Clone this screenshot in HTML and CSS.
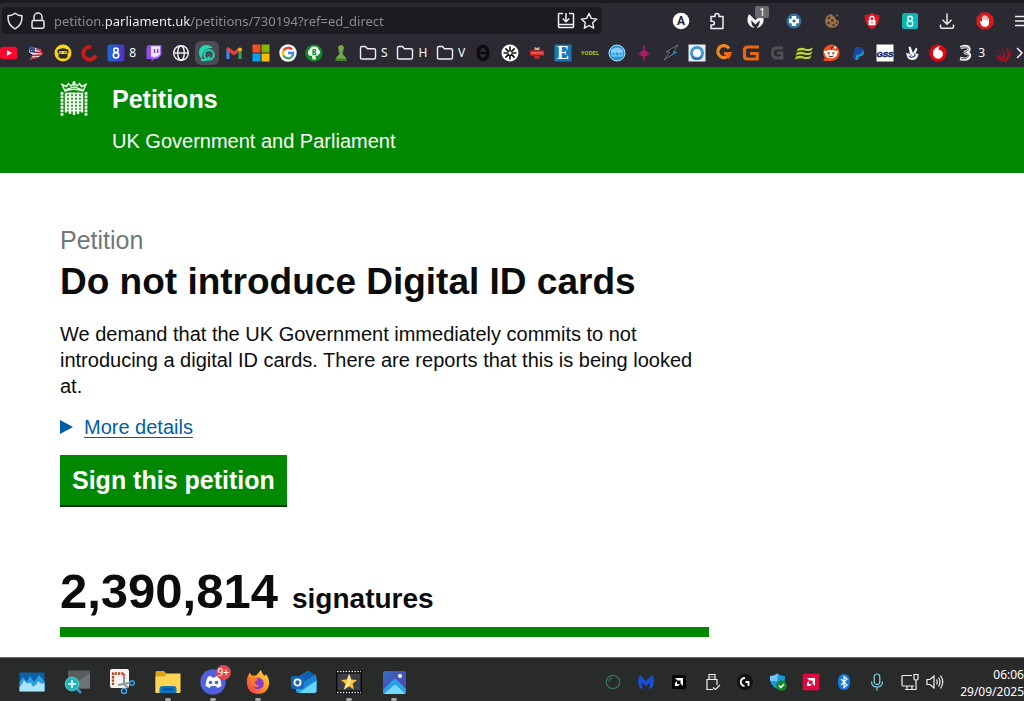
FILE: index.html
```html
<!DOCTYPE html>
<html lang="en">
<head>
<meta charset="utf-8">
<meta name="viewport" content="width=device-width, initial-scale=1">
<title>Do not introduce Digital ID cards - Petitions</title>
<link rel="stylesheet" href="styles.css">
</head>
<body>
<div class="browser">
  <div class="toolbar">
    <div class="urlbar">
      <svg class="ico18" viewBox="0 0 18 18" fill="none" stroke="#e8e8ec" stroke-width="1.5" stroke-linejoin="round"><path d="M9 1.3C7 3 4.500 3.800 2 3.800C1.600 9.500 4 14.300 9 16.800C14 14.300 16.400 9.500 16 3.800C13.500 3.800 11 3 9 1.300Z"/></svg>
      <svg class="ico18 lock" viewBox="0 0 18 18" fill="none" stroke="#e8e8ec" stroke-width="1.5"><rect x="3" y="8.500" width="12" height="7.800" rx="1.500"/><path d="M5 8.500V5a4 4 0 0 1 8 0v3.500"/></svg>
      <input class="address" type="text" aria-label="Address" value="petition.parliament.uk/petitions/730194?ref=ed_direct">
      <button class="tool" aria-label="Install page"><svg class="ico18" viewBox="0 0 18 18" fill="none" stroke="#f0f0f4" stroke-width="1.500"><path d="M6 1.500H2.200Q1.500 1.500 1.500 2.200V14.800Q1.500 15.500 2.200 15.500H15.800Q16.500 15.500 16.500 14.800V2.200Q16.500 1.500 15.800 1.500H12M1.500 12.500H16.500M9 1V9.500M5.700 6.500L9 9.700L12.300 6.500"/></svg></button>
      <button class="tool" aria-label="Bookmark this page"><svg class="ico18" viewBox="0 0 18 18" fill="none" stroke="#f0f0f4" stroke-width="1.400" stroke-linejoin="round"><path d="M9 1.500L11.300 6.400L16.700 7.100L12.700 10.800L13.700 16.200L9 13.500L4.300 16.200L5.300 10.800L1.300 7.100L6.700 6.400Z"/></svg></button>
    </div>
    <div class="extensions">
      <button class="tool" aria-label="Account"><svg class="ico20" viewBox="0 0 20 20"><circle cx="10" cy="10" r="8.300" fill="#fff"/><text class="glyph" x="10" y="14.200" font-size="12" fill="#25242c">A</text></svg></button>
      <button class="tool" aria-label="Extensions"><svg class="ico20" viewBox="0 0 20 20" fill="none" stroke="#f0f0f4" stroke-width="1.500" stroke-linejoin="round"><path d="M2 5.500H6V4.500a2 2 0 0 1 4 0V5.500H14V17.500H2V14H3.500a1.900 1.900 0 0 0 0-3.800H2Z"/></svg></button>
      <button class="tool badged" aria-label="Malwarebytes"><svg class="ico20" viewBox="0 0 20 20" fill="#f3f3f5"><path d="M2 3Q-1 9 1.500 13Q3.500 16.500 7.500 17Q3.500 13 4.500 9.500L8.500 13.500L12.500 9.500Q13.500 13 9.500 17Q13.500 16.500 15.500 13Q18 9 15 3L8.500 9Z"/></svg><span class="badge">1</span></button>
      <button class="tool" aria-label="Health extension"><svg class="ico20" viewBox="0 0 20 20"><circle cx="9" cy="10" r="7.500" fill="#356f9d"/><path d="M6.800 5H11.200V7.800H14V12.200H11.200V15H6.800V12.200H4V7.800H6.800Z" fill="#fff"/><rect x="7.600" y="8.600" width="2.800" height="2.800" fill="#356f9d"/></svg></button>
      <button class="tool" aria-label="Cookies"><svg class="ico20" viewBox="0 0 20 20"><path d="M9 3Q10 6 12 6Q12 9 16 10A7 7 0 1 1 9 3Z" fill="#96704a"/><g fill="#4e3523"><circle cx="6" cy="7" r="1.200"/><circle cx="9.500" cy="9.500" r="1.300"/><circle cx="5.500" cy="12" r="1.300"/><circle cx="10.500" cy="14" r="1.200"/><circle cx="13.500" cy="12" r="1"/></g><circle cx="14" cy="4.500" r="1" fill="#96704a"/></svg></button>
      <button class="tool" aria-label="Ad guard"><svg class="ico20" viewBox="0 0 20 20"><path d="M10 1.800Q13 4 17.500 4Q18 13.500 10 18.500Q2 13.500 2.500 4Q7 4 10 1.800Z" fill="#dd1820"/><rect x="6.500" y="9" width="7" height="5.300" rx="0.500" fill="#fff"/><path d="M8 9V7.500a2 2 0 0 1 4 0V9" fill="none" stroke="#fff" stroke-width="1.300"/><path d="M10 10.500V12.500" stroke="#dd1820"/></svg></button>
      <button class="tool" aria-label="Number eight"><svg class="ico20" viewBox="0 0 20 20"><defs><linearGradient id="teal" x2="1" y2="1"><stop stop-color="#0fb39b"/><stop offset="1" stop-color="#08bccd"/></linearGradient></defs><rect x="2" y="2" width="16" height="16" rx="2.500" fill="url(#teal)"/><g fill="none" stroke="#d9fff5" stroke-width="1.500"><circle cx="10" cy="7.500" r="2.300"/><circle cx="10" cy="12.500" r="2.800"/></g></svg></button>
      <button class="tool" aria-label="Downloads"><svg class="ico20" viewBox="0 0 20 20" fill="none" stroke="#e5e5ea" stroke-width="1.500"><path d="M9 2.500V13M4.500 8.800L9 13.200L13.500 8.800M2.500 13.500V16Q2.500 17.200 3.700 17.200H14.300Q15.500 17.200 15.500 16V13.500"/></svg></button>
      <button class="tool" aria-label="Ad blocker"><svg class="ico20" viewBox="0 0 20 20"><path d="M5.500 1.500H12.500L17.500 6.500V13.500L12.500 18.500H5.500L0.500 13.500V6.500Z" fill="#d91b1b"/><path d="M6 15Q4.500 13 3.800 10Q5 9.500 6 11V6Q7 5 7.400 6V4.700Q8.200 4 8.800 4.700V4.500Q9.800 3.800 10.200 4.900V5.500Q11.200 5 11.600 6V7.500Q12.500 7 12.900 8V12Q12.900 15.500 9.500 15.800Q7 16 6 15Z" fill="#fff"/><path d="M7.400 6V9M8.900 5V9M10.200 5.500V9M11.600 7V10" stroke="#d91b1b" stroke-width="0.400"/></svg></button>
      <button class="tool" aria-label="Menu"><svg class="menu-ico" viewBox="0 0 10 20" stroke="#f0f0f4" stroke-width="1.500"><path d="M1 5.500H10M1 10H10M1 14.500H10"/></svg></button>
    </div>
  </div>
  <nav class="bookmarks" aria-label="Bookmarks">
    <div class="bookmark-list">
      <a href="#" aria-label="YouTube"><svg class="ico18" viewBox="0 0 18 18"><rect x="0" y="2.700" width="17.500" height="12.600" rx="3" fill="#f8082e"/><path d="M7 6.300L12 9L7 11.700Z" fill="#fff"/></svg></a>
      <a href="#" aria-label="US flag"><svg class="ico18" viewBox="0 0 18 18"><path d="M2 2L14 5.500V8L15.500 9Q13 14.500 3 15.500L6 11L2 8Z" fill="#f0e9eb"/><path d="M9 5L14 6.500M8 8.300L16 8.500M5 11.500L15 11M4 14.500L11 13.500" stroke="#c91f34" stroke-width="1.500"/><path d="M1.500 1.500L8 3V9L3 8Z" fill="#253a7e"/><path d="M3 4H8M4 6.500H8" stroke="#fff" stroke-width="0.700" stroke-dasharray="0.800 1"/></svg></a>
      <a href="#" aria-label="Masked face"><svg class="ico18" viewBox="0 0 18 18"><circle cx="9" cy="9" r="8.500" fill="#fad51b"/><path d="M3.500 6Q9 2.500 14.500 6V8.500L13.500 9.500V13L11.500 14.500H6.500L4.500 13V9.500L3.500 8.500Z" fill="#302a17"/><rect x="5" y="7" width="8" height="3" rx="1.200" fill="#fad51b"/><circle cx="7" cy="8.500" r="0.700" fill="#302a17"/><circle cx="11" cy="8.500" r="0.700" fill="#302a17"/></svg></a>
      <a href="#" aria-label="Red crescent"><svg class="ico18" viewBox="0 0 18 18"><path d="M9.500 3A6.300 6.300 0 1 0 15.500 11.500" fill="none" stroke="#c91b19" stroke-width="4"/><path d="M8 0.500L12 2L10 6Z" fill="#c91b19"/></svg></a>
      <a href="#" aria-label="Eight"><svg class="ico18" viewBox="0 0 18 18"><defs><linearGradient id="eight" x2="1"><stop stop-color="#176bd6"/><stop offset="1" stop-color="#5131c9"/></linearGradient></defs><rect x="0.500" y="0.500" width="17" height="17" rx="3" fill="url(#eight)"/><g fill="none" stroke="#fff" stroke-width="1.600"><circle cx="9" cy="6.300" r="2.200"/><circle cx="9" cy="11.300" r="2.700"/></g></svg><span>8</span></a>
      <a href="#" aria-label="Twitch"><svg class="ico18" viewBox="0 0 18 18"><path d="M3 1H16.500V11L12.500 15H9.500L6.500 17.500V15H1.500V4Z" fill="#9250f2"/><path d="M6 2.300H15.200V10.300L12.500 12.700H10.500L8.500 14.500V12.700H6Z" fill="#eee5ff"/><path d="M9.500 5V9M12.700 5V9" stroke="#8145df" stroke-width="1.500"/></svg></a>
      <a href="#" aria-label="Website"><svg class="ico18" viewBox="0 0 18 18" fill="none" stroke="#f4f4f7" stroke-width="1.400"><circle cx="9" cy="9" r="7.300"/><ellipse cx="9" cy="9" rx="3.300" ry="7.300"/><path d="M1.700 9H16.300"/></svg></a>
      <a href="#" class="active" aria-label="Surfshark"><svg class="ico18" viewBox="0 0 18 18"><path d="M15 4Q12 0.500 7.500 1Q1 2 1 8.500Q1 13 4.500 15.500Q3.500 10 6 7Q9 3.500 15 4Z" fill="#20d7b1"/><circle cx="11" cy="10.800" r="4.800" fill="none" stroke="#20d7b1" stroke-width="2"/><path d="M3 16Q10 17 11.500 12.500" fill="none" stroke="#20d7b1" stroke-width="2.200"/></svg></a>
      <a href="#" aria-label="Gmail"><svg class="ico18" viewBox="0 0 18 18" fill="none" stroke-width="3.200"><path d="M3 15V5" stroke="#4284f3"/><path d="M15 15V5" stroke="#34a453"/><path d="M2 4L9 9.500L16 4" stroke="#e64337"/><path d="M15 7V4" stroke="#f6b913"/></svg></a>
      <a href="#" aria-label="Microsoft"><svg class="ico18" viewBox="0 0 18 18"><path d="M0.500 0.500H8.500V8.500H0.500Z" fill="#f15123"/><path d="M9.500 0.500H17.500V8.500H9.500Z" fill="#7fb901"/><path d="M0.500 9.500H8.500V17.500H0.500Z" fill="#01a4ed"/><path d="M9.500 9.500H17.500V17.500H9.500Z" fill="#feb903"/></svg></a>
      <a href="#" aria-label="Google"><svg class="ico18" viewBox="0 0 18 18"><circle cx="9" cy="9" r="8.700" fill="#fff"/><g fill="none" stroke-width="2.300"><path d="M13 5.500A5.200 5.200 0 0 0 4.500 6.500" stroke="#ea4335"/><path d="M4.500 6.500A5.300 5.300 0 0 0 4.500 11.500" stroke="#fbbc05"/><path d="M4.500 11.500A5.200 5.200 0 0 0 12.500 13" stroke="#34a853"/><path d="M12.500 13Q14.200 11.500 14.200 9H9" stroke="#4285f4"/></g></svg></a>
      <a href="#" aria-label="Green tree"><svg class="ico18" viewBox="0 0 18 18"><circle cx="9" cy="9" r="8.600" fill="#138a2b"/><path d="M5 5Q6 2 9 2.500Q13 2 13.500 5.500Q16 7 14.500 10Q13 12 10.500 12L11 15.500H7.500L7 12Q3 12 3 9Q3 6 5 5Z" fill="#f4fff4"/><path d="M8 5V11M8 5.500H10Q12 7 8.500 8Q12.500 9 10 10.700H8" fill="none" stroke="#138a2b" stroke-width="1.200"/></svg></a>
      <a href="#" aria-label="Chess"><svg class="ico18" viewBox="0 0 18 18"><path d="M9 1A3 3 0 0 1 11 6.200L12 7.500H10.500Q10.500 11 13.500 13L14.500 16.500H3.500L4.500 13Q7.500 11 7.500 7.500H6L7 6.200A3 3 0 0 1 9 1Z" fill="#71a944"/><path d="M3.500 14.500H14.500V17H3.500Z" fill="#4b7e35"/></svg></a>
      <a href="#"><svg class="ico18" viewBox="0 0 18 18" fill="none" stroke="#f1eef9" stroke-width="1.400" stroke-linejoin="round"><path d="M1.500 14V4Q1.500 2.500 3 2.500H6.500L8.500 4.700H15Q16.500 4.700 16.500 6V13.500Q16.500 15 15 15H3Q1.500 15 1.500 14Z"/></svg><span>S</span></a>
      <a href="#"><svg class="ico18" viewBox="0 0 18 18" fill="none" stroke="#f1eef9" stroke-width="1.400" stroke-linejoin="round"><path d="M1.500 14V4Q1.500 2.500 3 2.500H6.500L8.500 4.700H15Q16.500 4.700 16.500 6V13.500Q16.500 15 15 15H3Q1.500 15 1.500 14Z"/></svg><span>H</span></a>
      <a href="#"><svg class="ico18" viewBox="0 0 18 18" fill="none" stroke="#f1eef9" stroke-width="1.400" stroke-linejoin="round"><path d="M1.500 14V4Q1.500 2.500 3 2.500H6.500L8.500 4.700H15Q16.500 4.700 16.500 6V13.500Q16.500 15 15 15H3Q1.500 15 1.500 14Z"/></svg><span>V</span></a>
      <a href="#" aria-label="Black ring"><svg class="ico18" viewBox="0 0 18 18"><ellipse cx="9" cy="9" rx="5" ry="6.800" fill="none" stroke="#0c0c0e" stroke-width="3.200"/><path d="M5 9H13" stroke="#0c0c0e" stroke-width="2"/></svg></a>
      <a href="#" aria-label="Asterisk"><svg class="ico18" viewBox="0 0 18 18"><circle cx="9" cy="9" r="8.500" fill="#fff"/><path d="M9 2.500V7.500M9 10.500V15.500M2.500 9H7.500M10.500 9H15.500M4.400 4.400L7.800 7.800M10.200 10.200L13.600 13.600M13.600 4.400L10.200 7.800M7.800 10.200L4.400 13.600" stroke="#151515" stroke-width="1.700"/></svg></a>
      <a href="#" aria-label="Royal Mail"><svg class="ico18" viewBox="0 0 18 18"><path d="M2 6.500H16V11.500H2Z" fill="#dc2827"/><path d="M6.500 12H11.500V14.500H6.500Z" fill="#dc2827"/><path d="M6.500 3L9 4L11.500 3V6H6.500Z" fill="#e3ad75"/><path d="M3.500 9H14.500" stroke="#f4c7c4" stroke-dasharray="1 0.700"/></svg></a>
      <a href="#" aria-label="The Economist"><svg class="ico18" viewBox="0 0 18 18"><rect x="0.500" y="0.500" width="17" height="17" fill="#1778b9"/><text class="glyph serif" x="9" y="15" font-size="18" fill="#fff">E</text></svg></a>
      <a href="#" aria-label="Yodel"><svg class="ico18" viewBox="0 0 18 18"><text class="glyph" x="9" y="11" font-size="6" fill="#a2c614">YODEL</text></svg></a>
      <a href="#" aria-label="Blue bus"><svg class="ico18" viewBox="0 0 18 18"><circle cx="9" cy="9" r="8" fill="#2298dc" stroke="#b8dcf2"/><path d="M3 6Q9 1 15 6V8H3Z" fill="#8bcdf2"/><path d="M4 8H14V12H4ZM7 8V12M11 8V12" fill="none" stroke="#9ad4f3"/></svg></a>
      <a href="#" aria-label="Magenta cross"><svg class="ico18" viewBox="0 0 18 18" fill="none" stroke="#bd1768" stroke-width="1.500"><path d="M9 1.500V16.500M3.500 9.500H14.500M6.500 7V12M11.500 7V12"/><circle cx="9" cy="9.500" r="2.500"/></svg></a>
      <a href="#" aria-label="Lightning"><svg class="ico18" viewBox="0 0 18 18"><path d="M2 16L8 8H4L16 1L11 8H14L2 16Z" fill="#17191e" stroke="#74808b" stroke-width="0.900"/><path d="M5 14L12 8H16L9 12Z" fill="#2c7cab"/></svg></a>
      <a href="#" aria-label="Blue ring"><svg class="ico18" viewBox="0 0 18 18"><rect x="0.500" y="0.500" width="17" height="17" fill="#e3f0fb"/><circle cx="9" cy="9" r="5.500" fill="#fff" stroke="#4795d3" stroke-width="3"/><path d="M4 13A6.500 6.500 0 0 0 14 13" fill="none" stroke="#1b6ab0" stroke-width="1.500"/></svg></a>
      <a href="#" aria-label="Orange G"><svg class="ico18" viewBox="0 0 18 18"><path d="M14 4.500A6 6 0 1 0 14.500 9.500H9" fill="none" stroke="#f28718" stroke-width="3.200"/><path d="M9.500 8H16.500Q16.500 13 13.500 15L11.500 13L13 10.800H9.500Z" fill="#ee621d"/></svg></a>
      <a href="#" aria-label="Square G"><svg class="ico18" viewBox="0 0 18 18" fill="none" stroke="#e66810" stroke-width="3.200"><path d="M17 3H6Q2.500 3 2.500 6V12Q2.500 15 5.500 15H15.200V9.500H8"/></svg></a>
      <a href="#" aria-label="Grey G"><svg class="ico18" viewBox="0 0 18 18" fill="none" stroke="#505054" stroke-width="2.800"><path d="M14 4H8Q3.500 4 3.500 8V10Q4 14 8 14H13V9H8"/></svg></a>
      <a href="#" aria-label="Waves"><svg class="ico18" viewBox="0 0 18 18" fill="#bed52f"><path d="M3 4.500Q7 3 10 4.500T18 3.500L16.500 6.500Q13 7.500 9.500 6.500T1.500 7.500Z"/><path d="M2 8.500Q6 7 9.500 8.500T17.500 7.500L16 10.500Q12 11.500 8.500 10.500T0.500 11.500Z"/><path d="M1 12.500Q5 11 8.500 12.500T16.500 11.500L15 14.500Q11 15.500 8 14.500T0 15.500Z"/></svg></a>
      <a href="#" aria-label="Reddit"><svg class="ico18" viewBox="0 0 18 18"><path d="M1 17L3 14A8.200 8.200 0 1 1 9 17Z" fill="#f4501e"/><ellipse cx="9" cy="10" rx="6" ry="4.300" fill="#fff"/><circle cx="3.500" cy="8" r="1.600" fill="#fff"/><circle cx="14.500" cy="8" r="1.600" fill="#fff"/><circle cx="6.700" cy="9.300" r="1.200" fill="#ec4c24"/><circle cx="11.300" cy="9.300" r="1.200" fill="#ec4c24"/><path d="M6.500 12Q9 13.500 11.500 12M9 6L10 3L12.500 3.500" fill="none" stroke="#40211a"/><circle cx="13" cy="3.500" r="1.200" fill="#fff"/></svg></a>
      <a href="#" aria-label="PayPal"><svg class="ico18" viewBox="0 0 18 18"><path d="M6 3H11Q15 3.500 13.500 8Q12 11 8.500 10.500L7.500 14.500H3.500Z" fill="#174a9d"/><path d="M14 6Q16 8 14 11Q12.500 12.500 10 12.500L9 16H6L7.500 10.500Q13 11 14 6Z" fill="#1598dc"/></svg></a>
      <a href="#" aria-label="GSS"><svg class="ico18" viewBox="0 0 18 18"><rect x="0.500" y="0.500" width="17" height="17" fill="#fff"/><text class="glyph slanted" x="9" y="13" font-size="10" fill="#182064" stroke="#182064" stroke-width="0.500">GSS</text></svg></a>
      <a href="#" aria-label="National Lottery"><svg class="ico18" viewBox="0 0 18 18"><path d="M3 9Q6 9.500 7 10L5.500 3L7.500 2.500L10 9L13 3.500L14.500 5L12.500 9.500L15.500 10Q15 15.500 10 16Q4.500 16 4 12Z" fill="#f3f6fd"/><path d="M6 12Q9 15 12.500 11" fill="none" stroke="#274c9f" stroke-width="1.200"/><circle cx="8" cy="11" r="0.700" fill="#274c9f"/><circle cx="11.500" cy="10" r="0.700" fill="#274c9f"/></svg></a>
      <a href="#" aria-label="Vodafone"><svg class="ico18" viewBox="0 0 18 18"><circle cx="9" cy="9" r="8.700" fill="#df0712"/><path d="M12 2Q9.500 2.500 9.500 5.500Q14 6.500 14 10A5 5 0 0 1 4 9.500Q4 3 12 2Z" fill="#fff"/></svg></a>
      <a href="#" aria-label="Three"><svg class="ico18" viewBox="0 0 18 18" fill="none"><path d="M4.500 3.500Q12.500 1 13 5Q13 8 8 8.500Q14 8.500 13.500 12Q12.500 16.500 4 14.500" stroke="#ececec" stroke-width="3.400"/><path d="M5 3.500Q12 2 12.500 5.500Q12 8 7 8.700Q13 9 12.500 12Q11 15.500 5 14.500" stroke="#707074"/></svg><span>3</span></a>
      <a href="#" aria-label="Red swoosh"><svg class="ico18" viewBox="0 0 18 18" fill="#a71525"><path d="M4 1Q11 7 9 12Q7 15 1 13Q6 18 11 14Q14 9 4 1Z"/><path d="M9 0Q15 7 13 13Q10 17 5 16Q12 20 15 14Q17 7 9 0Z"/><path d="M14 1Q17 7 16.500 13Q18.500 7 14 1Z"/><path d="M2 5Q6 8 7 11Q4 13 0 10Q3 14 7.500 12.500Q9 9 2 5Z"/></svg></a>
    </div>
    <button class="tool more" aria-label="More bookmarks"><svg class="chevron" viewBox="0 0 8 18" fill="none" stroke="#f0f0f4" stroke-width="1.500"><path d="M1 4L6 9L1 14"/></svg></button>
  </nav>
</div>

<header class="site-header">
  <svg class="crest" viewBox="0 0 28 36" fill="none" stroke="#f3fff0" stroke-width="1.300">
    <path d="M5 10L2 3.500L6.500 5.500L8.500 2.500L11 5L14 2L17 5L19.500 2.500L21.500 5.500L26 3.500L23 10Q14 6.500 5 10Z" stroke-width="1.400"/>
    <path d="M14 0V5M12.500 1.500H15.500M4.500 9L14 6L23.500 9"/>
    <path d="M6 12.500V31.500M10 11.500V33M14 11.500V34M18 11.500V33M22 12.500V31.500" stroke-width="2.400"/>
    <path d="M5 12.500H23M5 16H23M5 19.500H23M5 23H23M5 26.500H23M5 29.500H23" stroke-width="1.700"/>
    <path d="M2 11V35M26 11V35" stroke-width="2.800" stroke-dasharray="2.700 0.800"/>
  </svg>
  <div>
    <a class="brand" href="#">Petitions</a>
    <p class="tagline">UK Government and Parliament</p>
  </div>
</header>

<main class="content">
  <h1 class="title"><span class="kicker">Petition</span>Do not introduce Digital ID cards</h1>
  <p class="lead">We demand that the UK Government immediately commits to not introducing a digital ID cards. There are reports that this is being looked at.</p>
  <details class="more-details"><summary><span class="summary-text">More details</span></summary></details>
  <button class="sign">Sign this petition</button>
  <p class="count"><span class="number">2,390,814</span> <span>signatures</span></p>
  <div class="bar" role="progressbar" aria-label="Signatures" aria-valuenow="100"></div>
</main>

<footer class="taskbar">
  <nav class="apps" aria-label="Apps">
    <button class="app" aria-label="Resource monitor"><svg class="ico26" viewBox="0 0 26 26"><rect x="0.500" y="3.500" width="25" height="19" rx="1" fill="#0c60aa"/><path d="M0.500 13L4 8L8 13L11 7L15 13L20 6L25.500 12V22H0.500Z" fill="#2c9ce0"/><path d="M0.500 18Q3 16 5 11Q8 16 10 14Q12 12 13 17Q17 18 19 12Q22 16 25.500 14V22.500H0.500Z" fill="#ace5fb"/></svg></button>
    <button class="app" aria-label="Screen magnifier"><svg class="ico26" viewBox="0 0 26 26"><rect x="4" y="1.500" width="22" height="18" rx="1" fill="#5b5e60"/><path d="M4 19.500L26 4V19.500Z" fill="#707375"/><path d="M12 19L17 24" stroke="#3297d3" stroke-width="2.600"/><circle cx="8" cy="15" r="6.800" fill="#20b6b9" stroke="#52d3d0"/><path d="M8 11V19M4 15H12" stroke="#fff" stroke-width="1.500"/></svg></button>
    <button class="app" aria-label="Snipping tool"><svg class="ico26" viewBox="0 0 26 26"><rect x="1" y="0" width="19" height="19" rx="2" fill="#f5f4f3"/><path d="M4 16V4.500H15V10" fill="none" stroke="#b9421c" stroke-width="2.300" stroke-dasharray="2.300 1"/><path d="M15 6V15L19 19M9 16L20 14" fill="none" stroke="#8e969c" stroke-width="2"/><circle cx="23" cy="14" r="2.300" fill="none" stroke="#3ca1e1" stroke-width="1.500"/><circle cx="15" cy="22" r="2.500" fill="none" stroke="#3ca1e1" stroke-width="1.500"/></svg></button>
    <button class="app running" aria-label="File explorer"><svg class="ico26" viewBox="0 0 26 26"><path d="M0.500 3Q0.500 2 1.500 2H9L12 5H25V24H0.500Z" fill="#dba21b"/><path d="M0.500 7.500H9L12 4.500H25.500V23Q25.500 24 24.500 24H1.500Q0.500 24 0.500 23Z" fill="#ffd553"/><path d="M4.500 24V20Q4.500 17 7.500 17H18.500Q21.500 17 21.500 20V24Z" fill="#1474bd"/><path d="M8 20.500H18" stroke="#0755a0" stroke-width="2"/></svg></button>
    <button class="app running badged" aria-label="Discord"><svg class="ico26" viewBox="0 0 26 26"><circle cx="13" cy="13" r="12.700" fill="#5060df"/><path d="M8 7.500L11 7L12 8.500H15L16 7L19 7.500Q21.500 12 21.500 17L17.500 19L16 17H11L9.500 19L5.500 17Q5.500 12 8 7.500Z" fill="#fff"/><circle cx="10.500" cy="13.500" r="1.800" fill="#5060df"/><circle cx="16.500" cy="13.500" r="1.800" fill="#5060df"/></svg><span class="count-badge">9+</span></button>
    <button class="app running" aria-label="Firefox"><svg class="ico26" viewBox="0 0 26 26"><defs><linearGradient id="fire" x1="1" y1="0" x2="0" y2="1"><stop stop-color="#ffe548"/><stop offset="0.500" stop-color="#ff901f"/><stop offset="1" stop-color="#f52b58"/></linearGradient></defs><path d="M3 7L4.500 3.500L7 6.500L11 6.500L16 1Q17 5 20 7L21 5Q25 10 24 16Q22 25 13 25Q3 24.500 2 15Q1.500 10 3 7Z" fill="url(#fire)"/><circle cx="13" cy="14.500" r="5.800" fill="#883bce"/><path d="M5 10Q11 7 13 11L9.500 13Q11 17 15 16Q11 20 7 16Z" fill="#ff7b2d"/></svg></button>
    <button class="app" aria-label="Outlook"><svg class="ico26" viewBox="0 0 26 26"><path d="M5 9L17 2L25.500 8V22Q25.500 24 23.500 24H8Q5 24 5 21Z" fill="#21a4e8"/><path d="M7 8L18 2L24 6L12 14Z" fill="#0e5daf"/><path d="M8 24L25.500 11V22Q25.500 24 23 24Z" fill="#66d6fb"/><path d="M13 13L25 5V12L12 20Z" fill="#1b82d2"/><rect x="0" y="7" width="13" height="13" rx="2" fill="#1267b9"/><circle cx="6.500" cy="13.500" r="3.100" fill="none" stroke="#fff" stroke-width="1.800"/></svg></button>
    <button class="app running" aria-label="Video editor"><svg class="ico26" viewBox="0 0 26 26"><rect x="0" y="1" width="26" height="24" fill="#080808"/><rect x="1.500" y="4.500" width="23" height="17" fill="#3a3e46"/><path d="M1 2.500H25M1 23.500H25" stroke="#f5f5f5" stroke-width="1.500" stroke-dasharray="1.500 1.400"/><path d="M13 5L15.200 10.500L21 11L16.600 14.700L18 20.500L13 17.300L8 20.500L9.400 14.700L5 11L10.800 10.500Z" fill="#ffc23b"/><path d="M13 5L15.200 10.500L13 17.300L8 20.500L11 13Z" fill="#ffe596"/></svg></button>
    <button class="app running" aria-label="Photos"><svg class="ico26" viewBox="0 0 26 26"><defs><linearGradient id="photo" x2="1" y2="1"><stop stop-color="#336bc8"/><stop offset="1" stop-color="#583da5"/></linearGradient></defs><rect x="2" y="2" width="23" height="23" rx="2" fill="url(#photo)"/><path d="M2 21L12 11Q14 9 16 11L25 20V23Q25 25 23 25H4Q2 25 2 23Z" fill="#2ba0e9"/><path d="M3 25L12 17Q14 15 16 17L24 24.500L23 25Z" fill="#79d8ff"/><circle cx="19" cy="7" r="2" fill="#f4f8ff"/></svg></button>
  </nav>
  <div class="tray">
    <button class="tray-item" aria-label="Green ring"><svg class="ico18" viewBox="0 0 18 18" fill="none" stroke="#32785a" stroke-width="1.200"><circle cx="9" cy="9" r="6.700"/><path d="M5 9Q5 5.500 8.500 5"/></svg></button>
    <button class="tray-item" aria-label="Malwarebytes"><svg class="ico18" viewBox="0 0 18 18"><path d="M3 2L9 8L15 2Q19 8 15 15L12 16L13.500 9.500L9 13L4.500 9.500L6 16L3 15Q-1 8 3 2Z" fill="#174fd2"/></svg></button>
    <button class="tray-item" aria-label="AMD software"><svg class="ico18" viewBox="0 0 18 18"><rect x="2" y="2" width="14" height="14" rx="2" fill="#000"/><path d="M5 5H13V13L10.500 10.500V7.500H7.500ZM5 10L7 8V11H10L8 13H5Z" fill="#fff"/></svg></button>
    <button class="tray-item" aria-label="Safely remove hardware"><svg class="ico18" viewBox="0 0 18 18" fill="none" stroke="#f0f0f0" stroke-width="1.200"><path d="M10 16.500H4V6.500H14V12M6 6.500V1.500H12V6.500M8 3.500V4.500M10 3.500V4.500M10 14.500L12.500 16.500L17 12"/></svg></button>
    <button class="tray-item" aria-label="Logitech G Hub"><svg class="ico18" viewBox="0 0 18 18"><circle cx="9" cy="9" r="8" fill="#121212"/><path d="M9 5A4 4 0 0 0 8.500 13M9.500 9H12.500V13" fill="none" stroke="#f4f4f4" stroke-width="1.900"/></svg></button>
    <button class="tray-item" aria-label="Windows Security"><svg class="ico18" viewBox="0 0 18 18"><path d="M8.500 0.500Q12 3 16 3Q16.500 13 8.500 16Q0.500 13 1 3Q5 3 8.500 0.500Z" fill="#1b99df"/><path d="M8.500 0.500V8H1Q0.800 6 1 3Q5 3 8.500 0.500Z" fill="#6fc9f3"/><circle cx="12.500" cy="12.500" r="5.200" fill="#138b24"/><path d="M10 12.500L12 14.500L15 11" fill="none" stroke="#fff" stroke-width="1.500"/></svg></button>
    <button class="tray-item" aria-label="AMD Radeon"><svg class="ico18" viewBox="0 0 18 18"><rect x="0.700" y="0.700" width="16.600" height="16.600" fill="#df0840"/><path d="M5 5H13V13L10.500 10.500V7.500H7.500ZM5 10L7 8V11H10L8 13H5Z" fill="#fff"/></svg></button>
    <button class="tray-item" aria-label="Bluetooth"><svg class="ico18" viewBox="0 0 18 18"><rect x="3" y="1" width="12" height="16" rx="6" fill="#1279df"/><path d="M6 6L12 12L9 14.500V3.500L12 6L6 12" fill="none" stroke="#fff" stroke-width="1.200"/></svg></button>
    <button class="tray-item" aria-label="Microphone"><svg class="ico18" viewBox="0 0 18 18" fill="none" stroke="#85d3e4" stroke-width="1.200"><rect x="6.200" y="1" width="5.600" height="10.500" rx="2.800"/><path d="M3.500 8.500Q3.500 14 9 14T14.500 8.500M9 14V17.500"/></svg></button>
    <button class="tray-item" aria-label="Network"><svg class="ico18" viewBox="0 0 18 18" fill="none" stroke="#f2f2f2" stroke-width="1.200"><path d="M11 2.500H2Q1 2.500 1 3.500V12Q1 13 2 13H13M4 16.500H13M6 13V16.500M11 13V16.500M13 1.500H17V6Q17 7 15 7Q13 7 13 6ZM15 7V16.500H12"/></svg></button>
    <button class="tray-item narrow" aria-label="Volume"><svg class="ico18" viewBox="0 0 18 18" fill="none" stroke="#f2f2f2" stroke-width="1.200"><path d="M1 6.500H4L8 3V15L4 11.500H1ZM10.500 6.500Q12 9 10.500 11.500M12.500 4.500Q15.500 9 12.500 13.500M14.500 2.500Q19 9 14.500 15.500"/></svg></button>
  </div>
  <time class="clock" datetime="2025-09-29T06:06">06:06<br>29/09/2025</time>
</footer>
</body>
</html>
```

FILE: styles.css
```css
* { box-sizing: border-box; }

body {
  margin: 0;
  min-height: 100vh;
  display: flex;
  flex-direction: column;
  background: #fff;
  color: #0b0c0c;
  font-family: "Liberation Sans", Arial, sans-serif;
  font-size: 20px;
  overflow-x: hidden;
}

h1, p { margin: 0; }
svg { display: block; flex: none; }
button { font: inherit; border: 0; padding: 0; background: none; color: inherit; }

.ico18 { width: 18px; height: 18px; }
.ico20 { width: 20px; height: 20px; }
.ico26 { width: 26px; height: 26px; }
.glyph { font-family: Roboto, sans-serif; font-weight: 700; text-anchor: middle; }
.serif { font-family: "Liberation Serif", serif; }
.slanted { font-family: "Liberation Sans Narrow", "Liberation Sans", sans-serif; font-style: italic; font-size: 8px; }

/* Browser chrome */
.browser {
  background: #2b2a33;
  border-top: 3px solid #1c1b22;
  color: #fbfbfe;
  font-family: "Noto Sans", sans-serif;
}

.toolbar { display: flex; align-items: center; padding: 4px 0 0 2px; }

.urlbar {
  flex: 1;
  display: flex;
  align-items: center;
  gap: 5px;
  height: 27px;
  padding: 0 4px;
  background: #1c1b22;
  border-radius: 4px;
}

.address {
  flex: 1;
  min-width: 0;
  margin-left: 2px;
  padding: 0;
  border: 0;
  outline: 0;
  color: #8f8e96;
  font: 13px/20px "Noto Sans", sans-serif;
  background: linear-gradient(90deg, #8f8e96 52px, #fbfbfe 52px, #fbfbfe 137px, #8f8e96 137px);
  -webkit-background-clip: text;
  background-clip: text;
  -webkit-text-fill-color: transparent;
}

.extensions {
  flex: none;
  width: 422px;
  padding-left: 69px;
  display: flex;
  justify-content: space-between;
}

.menu-ico { width: 10px; height: 20px; }
.badged { position: relative; }

.badge {
  position: absolute;
  top: -5px;
  right: -2px;
  width: 14px;
  height: 12px;
  border-radius: 2px;
  background: #6a6a6e;
  color: #fff;
  font: 11px/12px "Noto Sans", sans-serif;
  text-align: center;
}

.bookmarks { display: flex; align-items: center; height: 33px; padding-top: 4px; }
.bookmark-list { flex: 1; display: flex; justify-content: space-between; align-items: center; }

.bookmark-list a {
  display: flex;
  align-items: center;
  gap: 4px;
  color: #fbfbfe;
  font-size: 12px;
  line-height: 18px;
  text-decoration: none;
}

.bookmark-list .active { border-radius: 3px; background: #4c4b54; box-shadow: 0 0 0 3px #4c4b54; }
.more { margin-left: 4px; }
.chevron { width: 8px; height: 18px; }

/* Site header */
.site-header {
  display: flex;
  gap: 24px;
  padding: 14px 60px 20px;
  background: #008800;
  color: #fff;
}

.crest { width: 28px; height: 36px; }
.brand { display: block; color: #fff; font-size: 25px; font-weight: 700; line-height: 36px; text-decoration: none; }
.tagline { margin-top: 12px; line-height: 24px; }

/* Petition */
.content { flex: 1; width: 100%; max-width: 769px; padding: 50px 60px 20px; }
.title { font-size: 37px; line-height: 44px; }
.kicker { display: block; margin-bottom: 3px; color: #6f777b; font-size: 25px; font-weight: 400; line-height: 34px; }
.lead { margin-top: 17px; line-height: 26px; }
.more-details { margin-top: 15px; line-height: 26px; }

.more-details summary { display: flex; align-items: center; gap: 11px; color: #005ea5; cursor: pointer; }

.more-details summary::before {
  content: "";
  border-left: 13px solid #005ea5;
  border-top: 7px solid transparent;
  border-bottom: 7px solid transparent;
}

.summary-text { text-decoration: underline; text-decoration-thickness: 1px; text-underline-offset: 3px; }

.sign {
  display: block;
  margin-top: 15px;
  padding: 9px 12px 8px;
  border-bottom: 2px solid #003300;
  background: #008800;
  color: #fff;
  font-size: 25px;
  font-weight: 700;
  line-height: 33px;
}

.count { display: flex; align-items: baseline; gap: 14px; margin-top: 59px; font-size: 28px; font-weight: 700; line-height: 50px; }
.number { font-size: 49px; }
.bar { margin-top: 3px; height: 10px; background: #008800; }

/* Taskbar */
.taskbar {
  display: flex;
  height: 45px;
  padding-left: 9px;
  border-top: 1px solid #6d6d6d;
  background: #292a2a;
  color: #fff;
  font-family: "Noto Sans", sans-serif;
}

.apps { display: flex; width: 408px; }
.app { flex: 1; display: flex; flex-direction: column; align-items: center; padding-top: 11px; }
.running::after { content: ""; width: 6px; height: 3px; margin-top: 3px; border-radius: 2px; background: #a4a4a4; }

.count-badge {
  position: absolute;
  top: 7px;
  right: 5px;
  width: 15px;
  height: 15px;
  border-radius: 50%;
  background: #df4b55;
  color: #fff;
  font-size: 10px;
  line-height: 15px;
}

.tray { display: flex; margin-left: auto; padding: 4px 16px 0 0; }
.tray-item { width: 33px; display: flex; justify-content: center; align-items: center; }
.narrow { width: 18px; }
.clock { padding-top: 8px; font-size: 12px; line-height: 17px; text-align: right; }
```
